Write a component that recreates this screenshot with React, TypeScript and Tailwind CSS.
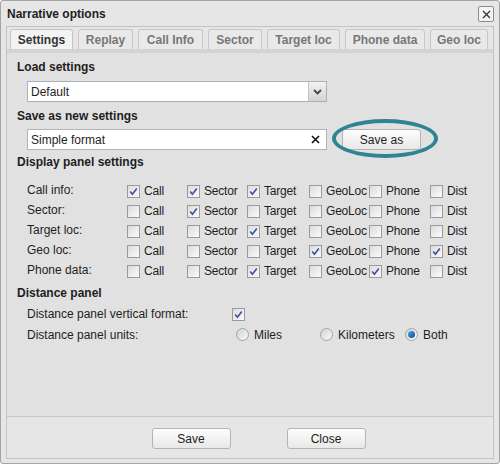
import { Fragment, useState } from "react";

const FONT = { fontFamily: '"Liberation Sans", Arial, sans-serif' };

const TABS = [
  { label: "Settings", w: "w-[63px]" },
  { label: "Replay", w: "w-[55px]" },
  { label: "Call Info", w: "w-[65px]" },
  { label: "Sector", w: "w-[54px]" },
  { label: "Target loc", w: "w-[73px]" },
  { label: "Phone data", w: "w-[80px]" },
  { label: "Geo loc", w: "w-[58px]" },
];

const COLS = ["Call", "Sector", "Target", "GeoLoc", "Phone", "Dist"];

const ROWS: { label: string; checks: boolean[] }[] = [
  { label: "Call info:", checks: [true, true, true, false, false, false] },
  { label: "Sector:", checks: [false, true, false, false, false, false] },
  { label: "Target loc:", checks: [false, false, true, false, false, false] },
  { label: "Geo loc:", checks: [false, false, false, true, false, true] },
  { label: "Phone data:", checks: [false, false, true, false, true, false] },
];

function Check({ on }: { on: boolean }) {
  return (
    <span className="w-[13px] h-[13px] shrink-0 border border-[#9a9a9a] bg-gradient-to-br from-[#dcdcdc] to-[#fbfbfb] flex items-center justify-center">
      {on && (
        <svg width="9" height="9" viewBox="0 0 9 9">
          <path d="M1.2 4.6 L3.4 7.2 L7.8 1.4" fill="none" stroke="#3a4fa6" strokeWidth="1.6" />
        </svg>
      )}
    </span>
  );
}

function Radio({ on }: { on: boolean }) {
  return (
    <span className="w-[13px] h-[13px] shrink-0 rounded-full border border-[#a3a3a3] bg-gradient-to-br from-[#d2d2d2] to-[#fafafa] flex items-center justify-center">
      {on && <span className="w-[7px] h-[7px] rounded-full bg-gradient-to-br from-[#4aa3e6] to-[#0b4f93]" />}
    </span>
  );
}

function Btn({ children, w }: { children: string; w: string }) {
  return (
    <button className={`${w} h-[21px] border border-[#b4b4b4] rounded-[3px] bg-gradient-to-b from-[#fdfdfd] to-[#e8e8e8] text-[12px] text-[#222]`}>
      {children}
    </button>
  );
}

export default function App() {
  const [tab] = useState(0);

  return (
    <div className="w-[500px] h-[465px] bg-white text-[12px] text-[#1e1e1e]" style={FONT}>
      <div className="w-[500px] h-[464px] border border-[#a4a4a4] rounded-[3px] bg-[#e6e6e6] flex flex-col">
        {/* title bar */}
        <div className="h-[25px] flex items-center justify-between pl-[6px] pr-[5px] pt-[1px]">
          <span className="font-bold text-[12px] text-[#222]">Narrative options</span>
          <span className="w-[16px] h-[16px] border border-[#8c8c8c] rounded-[2px] bg-[#f4f4f4] flex items-center justify-center">
            <svg width="9" height="9" viewBox="0 0 9 9">
              <path d="M1 1 L8 8 M8 1 L1 8" stroke="#333" strokeWidth="1.3" />
            </svg>
          </span>
        </div>

        {/* inner frame */}
        <div className="mx-[5px] flex-1 border border-[#c3c3c3] flex flex-col mb-[4px]">
          {/* tabs */}
          <div className="h-[22px] flex items-end gap-[5px] pl-[3px] pt-[2px]">
            {TABS.map((t, i) => (
              <div
                key={t.label}
                className={`${t.w} h-[20px] border border-b-0 rounded-t-[3px] flex items-center justify-center font-bold ${
                  i === tab
                    ? "border-[#c4c4c4] bg-[#f3f3f3] text-[#333]"
                    : "border-[#c8c8c8] bg-[#e9e9e9] text-[#777]"
                }`}
              >
                {t.label}
              </div>
            ))}
          </div>
          <div className="h-[4px] bg-[#d3d3d3]" />

          {/* content */}
          <div className="flex-1 bg-[#e1e1e1] border-b border-[#c6c6c6] pl-[10px] pt-[5px]">
            <div className="font-bold h-[18px] flex items-center">Load settings</div>
            <div className="ml-[10px] mt-[5px] w-[300px] h-[21px] border border-[#aab0c0] bg-white flex">
              <span className="flex-1 pl-[3px] flex items-center">Default</span>
              <span className="w-[18px] border-l border-[#c2c2c2] bg-gradient-to-b from-[#f2f2f2] to-[#d4d4d4] flex items-center justify-center">
                <svg width="9" height="6" viewBox="0 0 9 6">
                  <path d="M1 1 L4.5 4.5 L8 1" fill="none" stroke="#444" strokeWidth="1.8" />
                </svg>
              </span>
            </div>

            <div className="font-bold h-[18px] flex items-center mt-[5px]">Save as new settings</div>
            <div className="flex items-center mt-[4px] ml-[10px]">
              <div className="w-[300px] h-[21px] border border-[#b4b4b4] bg-white flex items-center justify-between pl-[3px] pr-[6px]">
                <span>Simple format</span>
                <svg width="9" height="9" viewBox="0 0 9 9">
                  <path d="M1 1 L8 8 M8 1 L1 8" stroke="#111" strokeWidth="1.6" />
                </svg>
              </div>
              <div className="relative ml-[15px]">
                <Btn w="w-[79px]">Save as</Btn>
                <span className="absolute -left-[10px] -right-[17px] -top-[10px] -bottom-[8px] rounded-[50%] border-[4px] border-[#2f8494] pointer-events-none" />
              </div>
            </div>

            <div className="font-bold h-[18px] flex items-center mt-[3px]">Display panel settings</div>
            <div className="ml-[10px] mt-[10px] grid grid-cols-[100px_60px_60px_62px_60px_61px_auto] auto-rows-[20px]">
              {ROWS.map((r) => (
                <Fragment key={r.label}>
                  <span className="flex items-center -mt-[2px]">{r.label}</span>
                  {r.checks.map((c, i) => (
                    <span key={i} className="flex items-center gap-[4px] tracking-[-0.2px]">
                      <Check on={c} />
                      <span>{COLS[i]}</span>
                    </span>
                  ))}
                </Fragment>
              ))}
            </div>

            <div className="font-bold h-[18px] flex items-center mt-[3px]">Distance panel</div>
            <div className="ml-[10px] mt-[2px] h-[20px] flex items-center">
              <span className="w-[205px]">Distance panel vertical format:</span>
              <Check on={true} />
            </div>
            <div className="ml-[10px] h-[21px] flex items-center">
              <span className="w-[209px]">Distance panel units:</span>
              <span className="w-[84px] flex items-center gap-[5px]">
                <Radio on={false} />
                Miles
              </span>
              <span className="w-[85px] flex items-center gap-[5px]">
                <Radio on={false} />
                Kilometers
              </span>
              <span className="flex items-center gap-[5px]">
                <Radio on={true} />
                Both
              </span>
            </div>
          </div>

          {/* footer */}
          <div className="h-[41px] flex items-start justify-center gap-[56px] pt-[11px] pl-[17px]">
            <Btn w="w-[79px]">Save</Btn>
            <Btn w="w-[79px]">Close</Btn>
          </div>
        </div>
      </div>
    </div>
  );
}
